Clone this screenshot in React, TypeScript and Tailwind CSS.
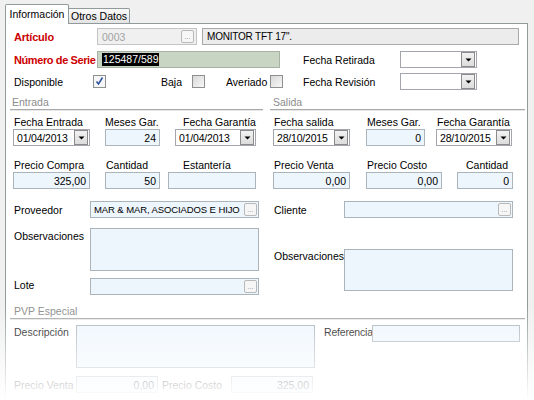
import React from 'react';

type P = { className?: string; children?: React.ReactNode };

const Dots = () => (
  <div className="ml-auto mr-px flex h-[13px] w-[13px] shrink-0 items-end justify-center rounded-[2px] border border-[#b9b9b9] bg-[#f6f6f6] pb-[2px] text-[7px] leading-[7px] text-[#8a8a8a]">
    ...
  </div>
);

function Input({ className = '', value = '', right = false, btn = false }: { className?: string; value?: string; right?: boolean; btn?: boolean }) {
  return (
    <div
      className={`flex h-[17px] items-center border border-[#abb3bb] bg-[#eef6fd] ${right ? 'justify-end pr-[3px]' : 'pl-[4px]'} ${className}`}
    >
      {value && <span>{value}</span>}
      {btn && <Dots />}
    </div>
  );
}

function Area({ className = '' }: P) {
  return <div className={`border border-[#abb3bb] bg-[#eef6fd] ${className}`} />;
}

function Combo({ className = '', value = '' }: { className?: string; value?: string }) {
  return (
    <div className={`flex h-[17px] items-center border border-[#a3a7ad] bg-white pl-[3px] pr-px ${className}`}>
      <span className="flex-1 tracking-[-0.2px]">{value}</span>
      <div className="flex h-[15px] w-[14px] items-center justify-center border border-[#8b8b8b] bg-linear-to-b from-[#f2f2f2] to-[#dcdcdc]">
        <svg width="7" height="4" viewBox="0 0 7 4">
          <path d="M0.5 0.5h6l-3 3z" fill="#000" />
        </svg>
      </div>
    </div>
  );
}

function Check({ checked = false }: { checked?: boolean }) {
  return (
    <div
      className={`flex h-[13px] w-[13px] shrink-0 items-center justify-center border border-[#8e8f8f] ${
        checked ? 'bg-[#f4f6f8]' : 'bg-linear-to-br from-[#d8d8d8] to-[#f7f7f7]'
      }`}
    >
      {checked && (
        <svg width="11" height="11" viewBox="0 0 11 11">
          <path d="M2.5 5.5l2 2.5L8.5 1.5" stroke="#2c4f9e" strokeWidth="1.5" fill="none" />
        </svg>
      )}
    </div>
  );
}

function Stack({ className = '', label, labelClass = 'pl-px', children }: { className?: string; label: string; labelClass?: string; children: React.ReactNode }) {
  return (
    <div className={`flex flex-col ${className}`}>
      <div className={`h-[14px] leading-[14px] ${labelClass}`}>{label}</div>
      {children}
    </div>
  );
}

const Rule = () => <div className="h-[2px] border-t border-b border-t-[#a9a9a9] border-b-[#e6e6e6]" />;

export default function App() {
  return (
    <div className="relative h-[400px] w-[534px] overflow-hidden whitespace-nowrap bg-[#f0f0f0] font-['Liberation_Sans',Arial,sans-serif] text-[10.5px] leading-[14px] text-black">
      {/* tabs */}
      <div className="flex h-[23px] items-end pl-[5px]">
        <div className="relative z-10 -mb-px flex h-[20px] w-[64px] items-center justify-center rounded-t-[2px] border border-b-0 border-[#919b9c] bg-white pb-px">
          Información
        </div>
        <div className="flex h-[15px] w-[61px] items-center justify-center rounded-tr-[2px] border border-b-0 border-l-0 border-[#919b9c] bg-linear-to-b from-[#fbfbfb] to-[#e4e4e4]">
          Otros Datos
        </div>
      </div>

      <div className="ml-[5px] h-[390px] w-[523px] border border-[#919b9c] bg-white">
        {/* Artículo */}
        <div className="mt-[4px] flex h-[17px] items-center pl-[8px]">
          <div className="w-[83px] text-[11px] font-bold tracking-[-0.2px] text-[#cc0000]">Artículo</div>
          <div className="flex h-[17px] w-[100px] items-center border border-[#c4c4c4] bg-[#f0f0f0] pl-[4px] pr-px text-[#a3a3a3]">
            <span>0003</span>
            <Dots />
          </div>
          <div className="ml-[5px] flex h-[17px] w-[317px] items-center border border-[#a9a9a9] bg-[#ececec] pl-[4px] text-[10px] tracking-[-0.2px]">
            MONITOR TFT 17".
          </div>
        </div>

        {/* Número de serie */}
        <div className="mt-[6px] flex h-[17px] items-center pl-[8px]">
          <div className="w-[83px] text-[11px] font-bold tracking-[-0.4px] text-[#cc0000]">Número de Serie</div>
          <div className="flex h-[17px] w-[183px] items-center border border-[#a9b1a6] bg-[#c8d5c3] pl-[4px]">
            <span className="bg-black px-px leading-[13px] text-white">125487/589</span>
          </div>
          <div className="ml-[23px] w-[97px]">Fecha Retirada</div>
          <Combo className="w-[77px]" />
        </div>

        {/* checks */}
        <div className="mt-[5px] flex h-[17px] items-center pl-[8px]">
          <div className="w-[79px]">Disponible</div>
          <Check checked />
          <div className="ml-[55px] w-[31px]">Baja</div>
          <Check />
          <div className="ml-[21px] w-[44px]">Averiado</div>
          <Check />
          <div className="ml-[20px] w-[97px]">Fecha Revisión</div>
          <Combo className="w-[77px]" />
        </div>

        {/* Entrada / Salida */}
        <div className="ml-[4px] mt-[5px] flex">
          <div className="w-[253px]">
            <div className="h-[14px] pl-[2px] text-[#8c8c8c]">Entrada</div>
            <Rule />
            <div className="mt-[4px] flex">
              <Stack className="ml-[3px] w-[77px]" label="Fecha Entrada">
                <Combo value="01/04/2013" />
              </Stack>
              <Stack className="ml-[15px] w-[55px]" label="Meses Gar." labelClass="text-right pr-[3px]">
                <Input right value="24" />
              </Stack>
              <Stack className="ml-[15px] w-[81px]" label="Fecha Garantía" labelClass="pl-[8px]">
                <Combo value="01/04/2013" />
              </Stack>
            </div>
            <div className="mt-[12px] flex">
              <Stack className="ml-[3px] w-[77px]" label="Precio Compra">
                <Input right value="325,00" />
              </Stack>
              <Stack className="ml-[15px] w-[55px]" label="Cantidad">
                <Input right value="50" />
              </Stack>
              <Stack className="ml-[8px] w-[88px]" label="Estantería" labelClass="pl-[15px]">
                <Input />
              </Stack>
            </div>

            <div className="mt-[12px] flex h-[17px] items-center">
              <div className="w-[80px] pl-[4px]">Proveedor</div>
              <div className="flex h-[17px] w-[169px] items-center border border-[#abb3bb] bg-[#eef6fd] pl-[3px]">
                <span className="text-[9.5px] tracking-[-0.1px]">MAR &amp; MAR, ASOCIADOS E HIJO</span>
                <Dots />
              </div>
            </div>
            <div className="mt-[10px] flex items-start">
              <div className="mt-px w-[80px] pl-[4px]">Observaciones</div>
              <Area className="h-[43px] w-[169px]" />
            </div>
            <div className="mt-[7px] flex items-start">
              <div className="w-[80px] pl-[4px]">Lote</div>
              <Input className="w-[169px]" btn />
            </div>
          </div>

          <div className="ml-[7px] w-[255px]">
            <div className="h-[14px] pl-[3px] text-[#8c8c8c]">Salida</div>
            <Rule />
            <div className="mt-[4px] flex">
              <Stack className="ml-[3px] w-[77px]" label="Fecha salida">
                <Combo value="28/10/2015" />
              </Stack>
              <Stack className="ml-[16px] w-[59px]" label="Meses Gar.">
                <Input right value="0" />
              </Stack>
              <Stack className="ml-[11px] w-[76px]" label="Fecha Garantía">
                <Combo value="28/10/2015" />
              </Stack>
            </div>
            <div className="mt-[12px] flex">
              <Stack className="ml-[3px] w-[77px]" label="Precio Venta">
                <Input right value="0,00" />
              </Stack>
              <Stack className="ml-[16px] w-[76px]" label="Precio Costo">
                <Input right value="0,00" />
              </Stack>
              <Stack className="ml-[15px] w-[56px]" label="Cantidad" labelClass="pl-[9px]">
                <Input right value="0" />
              </Stack>
            </div>

            <div className="mt-[12px] flex h-[17px] items-center">
              <div className="w-[74px] pl-[4px]">Cliente</div>
              <Input className="w-[169px]" btn />
            </div>
            <div className="mt-[31px] flex items-start">
              <div className="w-[74px] pl-[4px]">Observaciones</div>
              <Area className="h-[42px] w-[169px]" />
            </div>
          </div>
        </div>

        {/* PVP Especial */}
        <div className="ml-[4px] mt-[10px] w-[515px]">
          <div className="h-[13px] pl-[4px] leading-[13px] text-[#8c8c8c]">PVP Especial</div>
          <Rule />
        </div>
        <div className="mt-[5px] flex items-start pl-[8px]">
          <div className="w-[62px]">Descripción</div>
          <Area className="h-[43px] w-[239px]" />
          <div className="ml-[9px] w-[48px] tracking-[-0.2px]">Referencia</div>
          <Input className="w-[148px]" />
        </div>
        <div className="mt-[8px] flex items-center pl-[8px]">
          <div className="w-[62px]">Precio Venta</div>
          <Input className="w-[82px]" right value="0,00" />
          <div className="ml-[4px] w-[69px]">Precio Costo</div>
          <Input className="w-[82px]" right value="325,00" />
        </div>
      </div>

      {/* bottom fade */}
      <div className="pointer-events-none absolute bottom-0 left-0 right-0 top-[305px] bg-linear-to-b from-white/0 to-white" />
    </div>
  );
}
